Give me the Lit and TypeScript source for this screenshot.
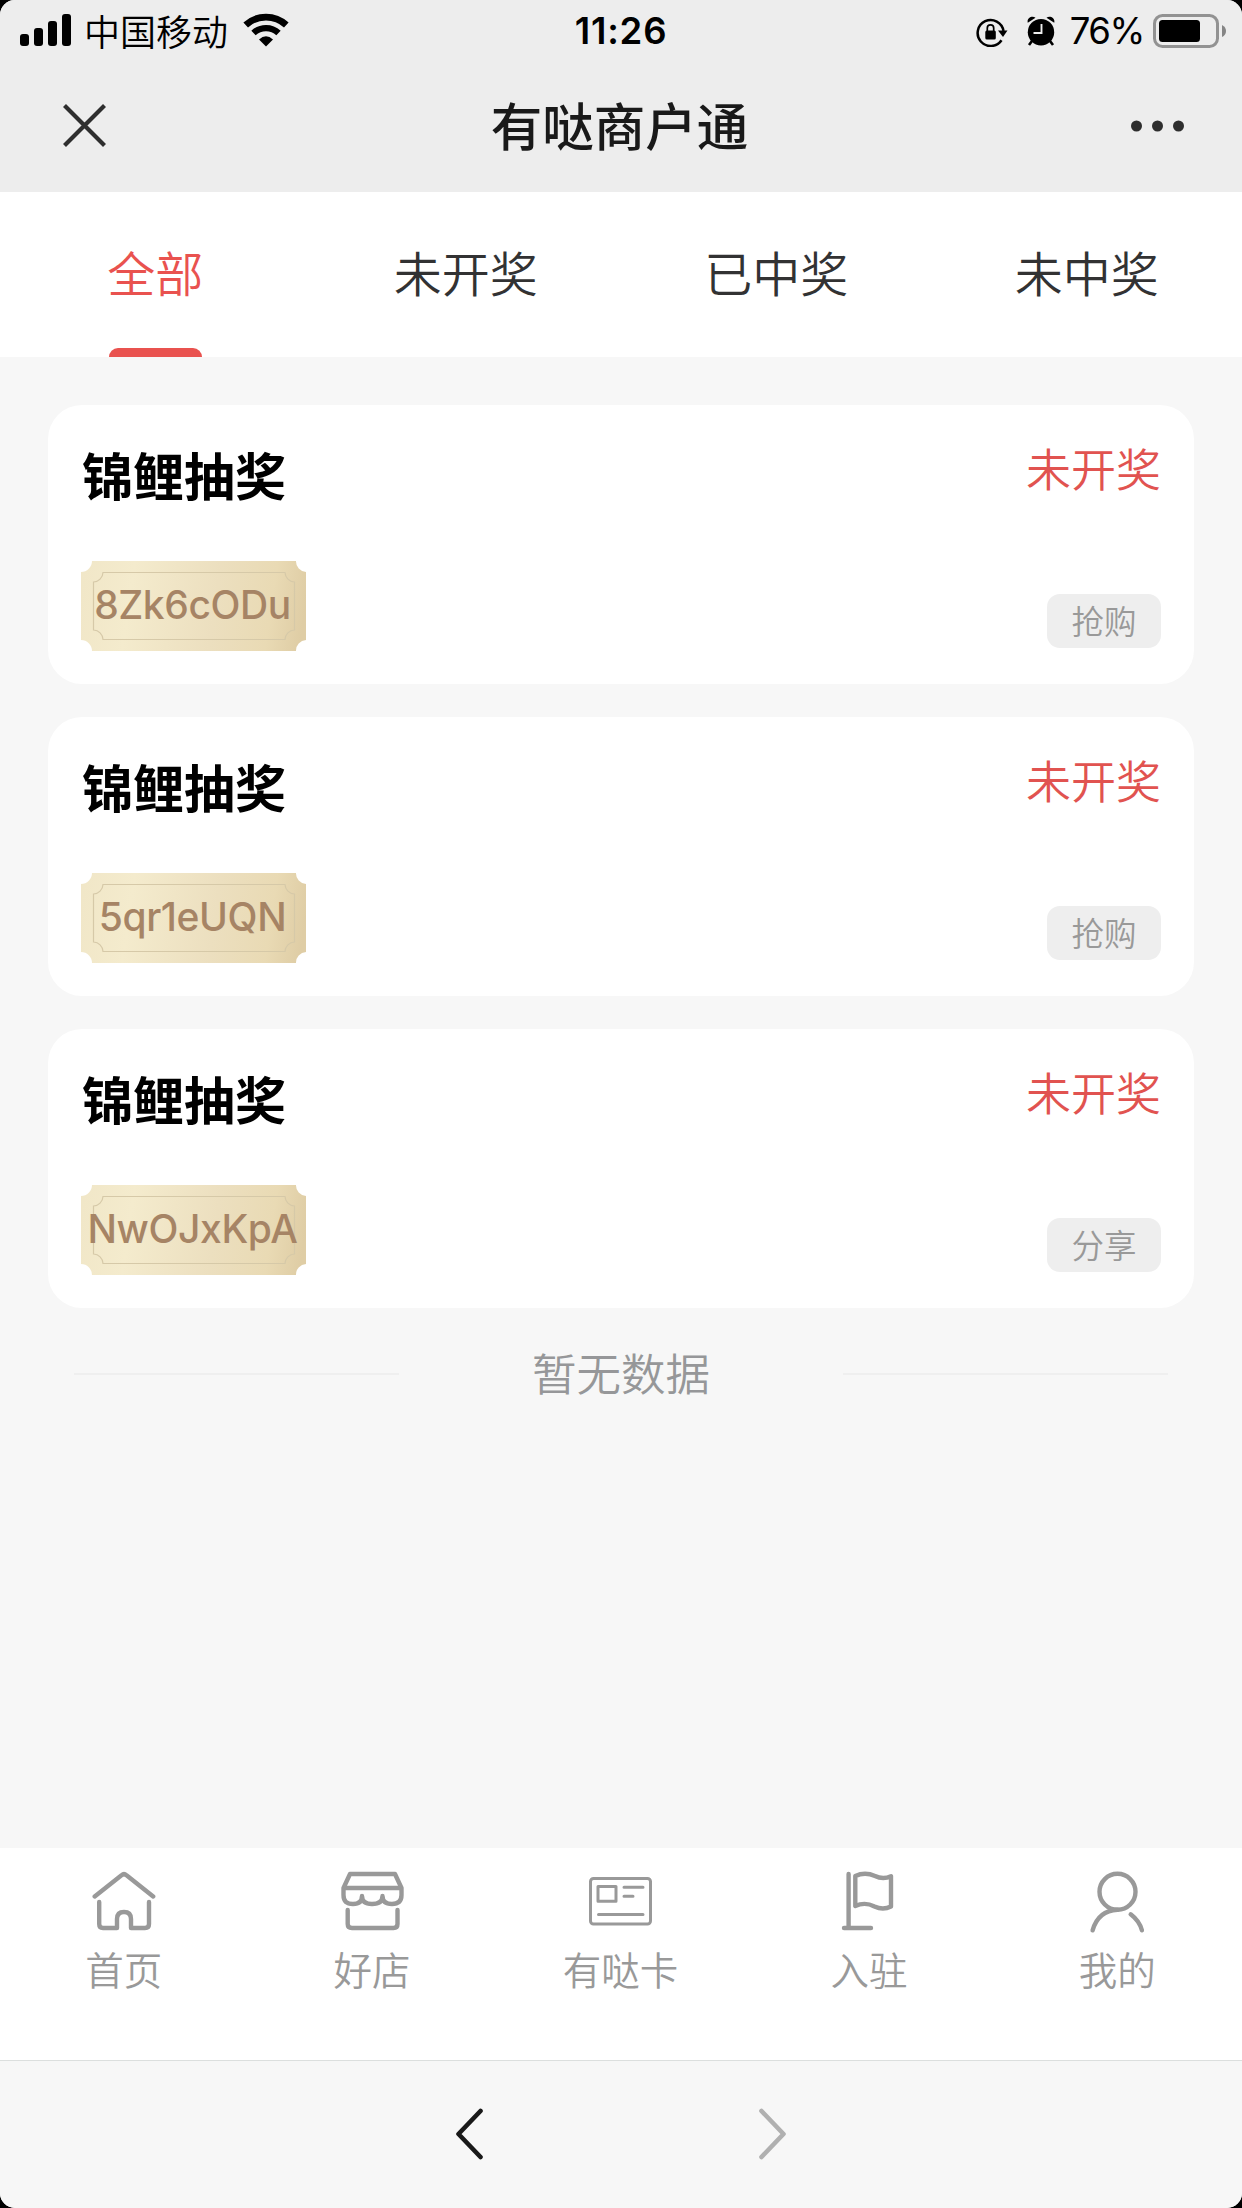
import { LitElement, html, css, svg } from "lit";
import { customElement, property, state } from "lit/decorators.js";
import { classMap } from "lit/directives/class-map.js";

interface Draw {
  title: string;
  code: string;
  status: string;
  source: string;
}

@customElement("status-bar")
class StatusBar extends LitElement {
  static styles = css`
    :host { display: flex; height: 64px; box-sizing: border-box; padding: 0 20px; align-items: stretch; color: #000; }
    .side { flex: 1 1 0; display: flex; align-items: center; }
    .side.end { justify-content: flex-end; }
    .carrier { font-size: 36px; line-height: 60px; margin: -5px 0 0 12px; font-weight: 350; }
    .time { font: 600 36.500px/62px Inter, sans-serif; letter-spacing: 0.800px; }
    .pct { font: 400 36.500px/62px Inter, sans-serif; letter-spacing: -1.400px; margin: -2px 9px 0 14px; }
    svg { display: block; flex: none; }
    .signal { margin-top: -4px; }
    .wifi { margin: -5px 0 0 15px; }
    .battery { margin: -3px -4px 0 0; }
    .alarm { margin: -3px 0 0 18px; }
    .lock { margin-top: -1px; }
  `;
  render() {
    return html`
      <div class="side">
        <svg class="signal" width="52" height="32" viewBox="0 0 52 32">
          <rect x="0" y="20" width="9" height="12" rx="3" /><rect x="14" y="14" width="9" height="18" rx="3" />
          <rect x="28" y="7" width="9" height="25" rx="3" /><rect x="42" y="0" width="9" height="32" rx="3" />
        </svg>
        <span class="carrier">中国移动</span>
        <svg class="wifi" width="46" height="34" viewBox="0 0 46 34">
          <path d="M23 33.500 L16 26.500 Q23 20 30 26.500 Z" />
          <path d="M10.500 20 A18.500 18.500 0 0 1 35.500 20" fill="none" stroke="#000" stroke-width="6.400" />
          <path d="M2.700 12 A30 30 0 0 1 43.300 12" fill="none" stroke="#000" stroke-width="6.800" />
        </svg>
      </div>
      <span class="time">11:26</span>
      <div class="side end">
        <svg class="lock" width="32" height="30" viewBox="0 0 32 30">
          <path d="M25.500 23.200 A13 13 0 1 1 27.500 14" fill="none" stroke="#000" stroke-width="2.500" />
          <path d="M22 13.500 H31.500 L27 20 Z" />
          <rect x="9.300" y="13.500" width="10.500" height="9" rx="1.500" />
          <path d="M11.300 14.500 V11 a3.200 3.200 0 0 1 6.400 0 V14.500" fill="none" stroke="#000" stroke-width="1.700" />
        </svg>
        <svg class="alarm" width="30" height="30" viewBox="0 0 30 30">
          <circle cx="15" cy="16.200" r="13.200" />
          <path d="M1.800 6.800 C0.500 2 6 -0.800 9.500 1.800 Z M28.200 6.800 C29.500 2 24 -0.800 20.500 1.800 Z" />
          <path d="M6 25 L3 29 M24 25 L27 29" stroke="#000" stroke-width="2.600" />
          <path d="M15.500 8 V17 H7.500" fill="none" stroke="#ededed" stroke-width="1.900" />
        </svg>
        <span class="pct">76%</span>
        <svg class="battery" width="73" height="34" viewBox="0 0 73 34">
          <rect x="1.500" y="1.500" width="63" height="31" rx="8" fill="none" stroke="#929292" stroke-width="3" />
          <rect x="6" y="6" width="41" height="22" rx="3.500" />
          <path d="M69 11 q4 2 4 6 q0 4 -4 6 z" fill="#858585" />
        </svg>
      </div>
    `;
  }
}

@customElement("title-bar")
class TitleBar extends LitElement {
  static styles = css`
    :host { display: flex; height: 128px; box-sizing: border-box; padding: 0 57px 4px 63px; align-items: center; justify-content: space-between; }
    .title { font-size: 51.500px; line-height: 70px; font-weight: 500; color: #191919; margin: -5px 0 0 2px; }
    svg { display: block; }
    .close { margin-top: -1px; }
  `;
  render() {
    return html`
      <svg class="close" width="43" height="43" viewBox="0 0 43 43"><path d="M1.500 1.500 L41.500 41.500 M41.500 1.500 L1.500 41.500" stroke="#2e2e2e" stroke-width="4.200" /></svg>
      <span class="title">有哒商户通</span>
      <svg width="54" height="12" viewBox="0 0 54 12" fill="#2e2e2e"><circle cx="5.500" cy="6" r="5.500" /><circle cx="26.500" cy="6" r="5.500" /><circle cx="47.500" cy="6" r="5.500" /></svg>
    `;
  }
}

@customElement("filter-tabs")
class FilterTabs extends LitElement {
  static styles = css`
    :host { display: grid; grid-template-columns: repeat(4, 1fr); height: 165px; background: #fff; }
    .tab { display: flex; flex-direction: column; align-items: center; justify-content: space-between; color: #323233; font-size: 48px; font-weight: 350; cursor: pointer; }
    .label { line-height: 70px; margin-top: 44px; }
    .bar { width: 93px; height: 9px; border-radius: 9px 9px 0 0; }
    .active { color: #e9524f; }
    .active .bar { background: #e9524f; }
  `;
  @state() selected = 0;
  private names = ["全部", "未开奖", "已中奖", "未中奖"];
  render() {
    return this.names.map(
      (n, i) => html`<div class=${classMap({ tab: true, active: i === this.selected })} @click=${() => (this.selected = i)}>
        <span class="label">${n}</span><span class="bar"></span>
      </div>`
    );
  }
}

@customElement("draw-card")
class DrawCard extends LitElement {
  static styles = css`
    :host { display: flex; justify-content: space-between; box-sizing: border-box; height: 279px; border-radius: 34px; background: #fff; padding: 33px; }
    .col { display: flex; flex-direction: column; justify-content: space-between; }
    .right { align-items: flex-end; padding-bottom: 3px; }
    .title { font-size: 51px; line-height: 74px; font-weight: 700; color: #000; margin: -1px 0 0 1px; }
    .ticket { display: grid; width: 225px; height: 90px; }
    .ticket > * { grid-area: 1 / 1; }
    .code { display: flex; align-items: center; justify-content: center; font: 500 39px/46px Inter, "Liberation Sans", sans-serif; color: #a68465; padding: 0 2px 3px 0; white-space: nowrap; letter-spacing: -0.400px; z-index: 1; }
    .status { font-size: 45px; line-height: 64px; margin-top: -2px; font-weight: 350; color: #e15350; }
    .tag { width: 114px; height: 54px; line-height: 52px; border-radius: 13px; background: #eee; color: #999; font-size: 32.500px; font-weight: 350; text-align: center; }
  `;
  @property({ attribute: false }) draw!: Draw;
  render() {
    const d = this.draw;
    return html`
      <div class="col">
        <span class="title">${d.title}</span>
        <div class="ticket">
          <svg width="225" height="90" viewBox="0 0 225 90">
            <defs>
              <linearGradient id="gold" gradientUnits="userSpaceOnUse" x1="0" y1="30" x2="222" y2="62">
                <stop offset="0" stop-color="#f1e7c8" /><stop offset="0.220" stop-color="#f4ebcd" />
                <stop offset="0.600" stop-color="#ecdfbf" /><stop offset="0.850" stop-color="#e9dab4" /><stop offset="1" stop-color="#dfcda5" />
              </linearGradient>
            </defs>
            <path fill="url(#gold)" d="M11 0 H215 A10.500 10.500 0 0 0 225 11 V79 A10.500 10.500 0 0 0 215 90 H11 A11 11 0 0 0 0 79 V11 A11 11 0 0 0 11 0 Z" />
            <path fill="none" stroke="#d6c9a8" stroke-width="1.200" d="M22 11.500 H204 A10 10 0 0 0 213.500 21 V69 A10 10 0 0 0 204 78.500 H22 A10 10 0 0 0 12.500 69 V21 A10 10 0 0 0 22 11.500 Z" />
          </svg>
          <span class="code">${d.code}</span>
        </div>
      </div>
      <div class="col right">
        <span class="status">${d.status}</span>
        <span class="tag">${d.source}</span>
      </div>
    `;
  }
}

const icons = {
  home: svg`<path d="M2.700 26.500 L29.500 5.300 Q32 3 34.500 5.300 L61.200 26.500" /><path d="M7.200 32 V54 Q7.200 58 11 58 H25 V49 Q25 42 32 42 Q39 42 39 49 V58 H53 Q57 58 57 54 V32" />`,
  shop: svg`<path d="M9 4 H54 L60.500 18 V25 Q60.500 34 51 34 Q41.500 34 41.500 26 Q41.500 34 31 34 Q21 34 21 26 Q21 34 12 34 Q2.500 34 2.500 25 V18 Z M3 18 H60" /><path d="M6.700 40 V54 Q6.700 58 11 58 H52.500 Q56.500 58 56.500 54 V40" />`,
  card: svg`<g stroke-width="3"><rect x="1.500" y="8.500" width="60" height="45.500" rx="3" /><rect x="9" y="16.500" width="18" height="14.800" /><path d="M35 17.300 H54 M35 26.300 H44 M9.500 44.500 H54" /></g>`,
  flag: svg`<path d="M11.600 4 V58 M7 58 H34" /><path d="M18.300 6 Q28 1.500 38 6 Q46 10 54 6.200 V36.500 Q46 40.500 37.500 36.500 Q28 31.500 18.300 36 Z" />`,
  user: svg`<circle cx="31.500" cy="21.800" r="18" /><path d="M6.600 60.300 Q12.500 40.500 31.500 39.800 M44.700 44.300 Q53.500 51 55.900 60.300" />`,
};

@customElement("nav-tabs")
class NavTabs extends LitElement {
  static styles = css`
    :host { display: grid; grid-template-columns: repeat(5, 1fr); height: 212px; background: #fff; color: #999; }
    .item { display: flex; flex-direction: column; align-items: center; padding-top: 22px; }
    .label { font-size: 38.500px; font-weight: 350; line-height: 56px; margin: 6px 1px 0 0; }
    svg { display: block; fill: none; stroke: #999; stroke-width: 4.400; stroke-linecap: round; stroke-linejoin: round; }
  `;
  private items = [
    { icon: icons.home, label: "首页" },
    { icon: icons.shop, label: "好店" },
    { icon: icons.card, label: "有哒卡" },
    { icon: icons.flag, label: "入驻" },
    { icon: icons.user, label: "我的" },
  ];
  render() {
    return this.items.map(
      (i) => html`<div class="item"><svg width="64" height="64" viewBox="0 0 64 64">${i.icon}</svg><span class="label">${i.label}</span></div>`
    );
  }
}

@customElement("app-root")
class AppRoot extends LitElement {
  static styles = css`
    :host { display: block; background: #000; font-family: "Noto Sans CJK SC", sans-serif; }
    .screen { display: flex; flex-direction: column; width: 1242px; height: 2208px; border-radius: 15px; overflow: hidden; background: #f7f7f7; }
    .top { background: #ededed; }
    .list { flex: 1; display: flex; flex-direction: column; gap: 33px; padding: 48px 48px 0; }
    .end { display: flex; align-items: center; justify-content: space-between; padding: 0 26px; height: 66px; }
    .end .rule { width: 325px; height: 2px; background: #efefef; }
    .end .note { font-size: 44.500px; font-weight: 350; color: #969799; line-height: 62px; margin-top: -5px; }
    .foot { height: 148px; box-sizing: border-box; border-top: 1px solid #dcdfde; background: #f7f7f7; display: flex; justify-content: center; gap: 276px; padding-top: 46px; }
    .foot svg { display: block; fill: none; stroke-width: 4.600; stroke-linecap: round; stroke-linejoin: round; }
    .back { stroke: #191919; }
    .next { stroke: #b0b0b0; }
  `;
  private draws: Draw[] = [
    { title: "锦鲤抽奖", code: "8Zk6cODu", status: "未开奖", source: "抢购" },
    { title: "锦鲤抽奖", code: "5qr1eUQN", status: "未开奖", source: "抢购" },
    { title: "锦鲤抽奖", code: "NwOJxKpA", status: "未开奖", source: "分享" },
  ];
  render() {
    return html`
      <div class="screen">
        <div class="top"><status-bar></status-bar><title-bar></title-bar></div>
        <filter-tabs></filter-tabs>
        <div class="list">
          ${this.draws.map((d) => html`<draw-card .draw=${d}></draw-card>`)}
          <div class="end"><span class="rule"></span><span class="note">暂无数据</span><span class="rule"></span></div>
        </div>
        <nav-tabs></nav-tabs>
        <div class="foot">
          <svg class="back" width="27" height="54" viewBox="0 0 27 54"><path d="M24.500 4 L2.500 27 L24.500 50" /></svg>
          <svg class="next" width="27" height="54" viewBox="0 0 27 54"><path d="M2.500 4 L24.500 27 L2.500 50" /></svg>
        </div>
      </div>
    `;
  }
}
